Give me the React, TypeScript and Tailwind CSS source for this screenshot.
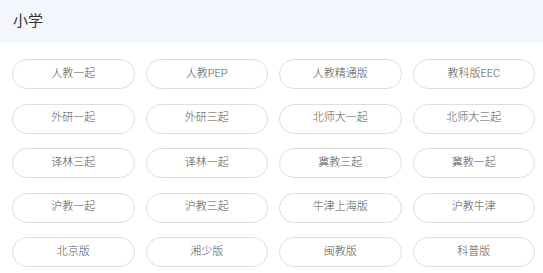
const books = [
  '人教一起', '人教PEP', '人教精通版', '教科版EEC',
  '外研一起', '外研三起', '北师大一起', '北师大三起',
  '译林三起', '译林一起', '冀教三起', '冀教一起',
  '沪教一起', '沪教三起', '牛津上海版', '沪教牛津',
  '北京版', '湘少版', '闽教版', '科普版',
];

export default function App() {
  return (
    <div className="w-[543px] h-[273px] overflow-hidden bg-white font-['Roboto','Noto_Sans_CJK_SC',sans-serif]">
      {/* Header */}
      <div className="h-[43px] bg-[#f3f6fd] flex items-center pl-[13px]">
        <span className="text-[15px] text-[#333]">小学</span>
      </div>

      {/* Book versions */}
      <div className="grid grid-cols-4 gap-x-[11px] gap-y-[14.5px] pt-4 pl-3 pr-2">
        {books.map((name) => (
          <button
            key={name}
            className="h-[30px] rounded-full border border-[#dedede] bg-white text-[11px] font-light text-[#555] flex items-center justify-center"
          >
            {name}
          </button>
        ))}
      </div>
    </div>
  );
}
